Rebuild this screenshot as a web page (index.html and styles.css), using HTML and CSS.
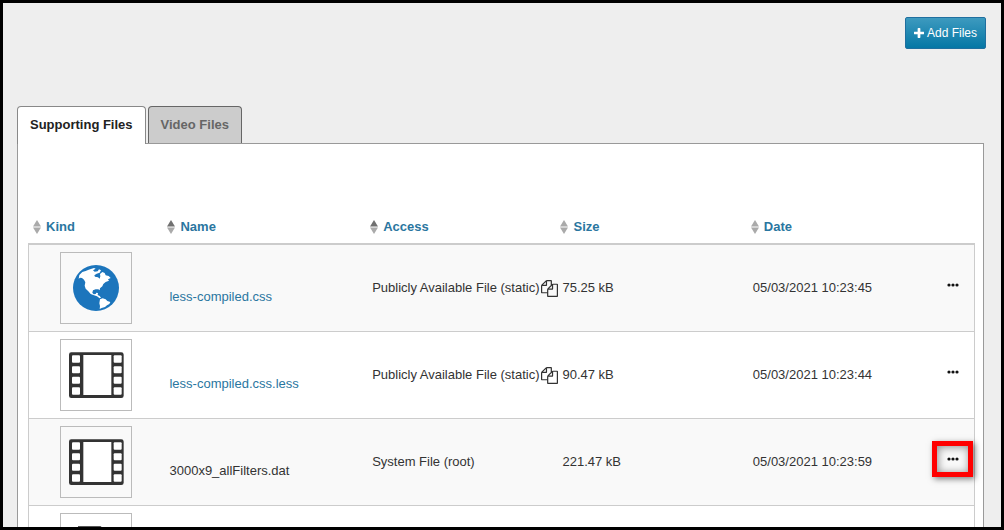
FILE: index.html
```html
<!DOCTYPE html>
<html lang="en">
<head>
<meta charset="utf-8">
<title>Files</title>
<link rel="stylesheet" href="styles.css">
</head>
<body class="page">
<svg class="sprite" aria-hidden="true">
  <symbol id="plus" viewBox="192 128 1408 1408"><path d="M1600 736v192q0 40-28 68t-68 28h-416v416q0 40-28 68t-68 28h-192q-40 0-68-28t-28-68v-416h-416q-40 0-68-28t-28-68v-192q0-40 28-68t68-28h416v-416q0-40 28-68t68-28h192q40 0 68 28t28 68v416h416q40 0 68 28t28 68z"/></symbol>
  <symbol id="copy" viewBox="0 0 1792 1792"><path d="M1696 384q40 0 68 28t28 68v1216q0 40-28 68t-68 28h-960q-40 0-68-28t-28-68v-288h-544q-40 0-68-28t-28-68v-672q0-40 20-88t48-76l408-408q28-28 76-48t88-20h416q40 0 68 28t28 68v328q68-40 128-40h416zm-544 213l-299 299h299v-299zm-640-384l-299 299h299v-299zm196 647l316-316v-416h-384v416q0 40-28 68t-68 28h-416v640h512v-256q0-40 20-88t48-76zm956 804v-1152h-384v416q0 40-28 68t-68 28h-416v640h896z"/></symbol>
  <symbol id="sort" viewBox="0 0 8 14"><path class="sort-up" d="M4 0L8 6.500H0z"/><path class="sort-down" d="M0 7.500H8L4 14z"/></symbol>
  <symbol id="dots" viewBox="0 0 12 4"><circle cx="2" cy="2" r="1.600"/><circle cx="6" cy="2" r="1.600"/><circle cx="10" cy="2" r="1.600"/></symbol>
  <symbol id="globe" viewBox="33 24 210 210">
    <circle cx="138" cy="129" r="69" fill="#1c75bc"/>
    <path fill="#fff" d="M86 101L88 90L97 81L107 78L116 74L132 69L137 71L129 76L134 80L143 79L147 73L153 76L149 83L140 86L133 91L135 95L144 97L149 101L151 94L150 87L157 81L164 84L167 91L176 93L182 99L174 103L177 107L167 111L160 117L157 124L150 130L149 136L145 133L137 133L129 136L127 143L131 148L137 147L139 143L144 144L143 150L149 153L153 158L149 160L141 154L132 151L122 147L115 139L107 131L104 122L106 112L102 104L96 99L90 98Z"/>
    <path fill="#fff" d="M150 163L158 160L167 163L172 168L181 171L178 177L171 181L165 186L155 189L149 192L150 183L148 175Z"/>
  </symbol>
  <symbol id="film" viewBox="33 15 210 210">
    <rect x="57" y="52" width="164" height="137" rx="7" fill="#333"/>
    <g fill="#fff"><rect x="100" y="60" width="84" height="120"/>
    <rect x="66" y="61" width="24" height="22" rx="3"/><rect x="66" y="94" width="24" height="21" rx="3"/><rect x="66" y="125" width="24" height="21" rx="3"/><rect x="66" y="157" width="24" height="22" rx="3"/>
    <rect x="191" y="61" width="24" height="22" rx="3"/><rect x="191" y="94" width="24" height="21" rx="3"/><rect x="191" y="125" width="24" height="21" rx="3"/><rect x="191" y="157" width="24" height="22" rx="3"/></g>
  </symbol>
  <symbol id="doc" viewBox="0 0 70 70"><path d="M18.500 13.500H39L51.500 26V56.500H18.500zM38 14V27H51" fill="#fff" stroke="#555" stroke-width="3"/></symbol>
</svg>

<header class="toolbar">
  <button type="button" class="add-button"><svg class="plus-icon" aria-hidden="true"><use href="#plus"/></svg>Add Files</button>
</header>

<main class="content">
  <div class="tabs" role="tablist">
    <button type="button" class="tab tab-active" role="tab" aria-selected="true">Supporting Files</button>
    <button type="button" class="tab" role="tab" aria-selected="false">Video Files</button>
  </div>
  <section class="panel">
    <table class="files">
      <colgroup><col class="col-kind"><col class="col-name"><col class="col-mid"><col class="col-mid"><col class="col-mid"><col></colgroup>
      <thead>
        <tr>
          <th><button type="button" class="sort"><svg class="sort-icon" aria-hidden="true"><use href="#sort"/></svg>Kind</button></th>
          <th><button type="button" class="sort sorted"><svg class="sort-icon" aria-hidden="true"><use href="#sort"/></svg>Name</button></th>
          <th><button type="button" class="sort sorted"><svg class="sort-icon" aria-hidden="true"><use href="#sort"/></svg>Access</button></th>
          <th><button type="button" class="sort"><svg class="sort-icon" aria-hidden="true"><use href="#sort"/></svg>Size</button></th>
          <th><button type="button" class="sort"><svg class="sort-icon" aria-hidden="true"><use href="#sort"/></svg>Date</button></th>
          <th></th>
        </tr>
      </thead>
      <tbody>
        <tr>
          <td class="kind"><svg class="thumb" role="img" aria-label="Web"><use href="#globe"/></svg></td>
          <td class="name"><a href="#">less-compiled.css</a></td>
          <td>Publicly Available File (static)<button type="button" class="icon-button copy" aria-label="Copy link"><svg class="copy-icon"><use href="#copy"/></svg></button></td>
          <td>75.25 kB</td>
          <td>05/03/2021 10:23:45</td>
          <td class="actions"><button type="button" class="icon-button" aria-label="More actions"><svg class="dots-icon"><use href="#dots"/></svg></button></td>
        </tr>
        <tr>
          <td class="kind"><svg class="thumb" role="img" aria-label="Media"><use href="#film"/></svg></td>
          <td class="name"><a href="#">less-compiled.css.less</a></td>
          <td>Publicly Available File (static)<button type="button" class="icon-button copy" aria-label="Copy link"><svg class="copy-icon"><use href="#copy"/></svg></button></td>
          <td>90.47 kB</td>
          <td>05/03/2021 10:23:44</td>
          <td class="actions"><button type="button" class="icon-button" aria-label="More actions"><svg class="dots-icon"><use href="#dots"/></svg></button></td>
        </tr>
        <tr>
          <td class="kind"><svg class="thumb" role="img" aria-label="Media"><use href="#film"/></svg></td>
          <td class="name">3000x9_allFilters.dat</td>
          <td>System File (root)</td>
          <td>221.47 kB</td>
          <td>05/03/2021 10:23:59</td>
          <td class="actions"><button type="button" class="icon-button highlighted" aria-label="More actions"><svg class="dots-icon"><use href="#dots"/></svg></button></td>
        </tr>
        <tr>
          <td class="kind"><svg class="thumb" role="img" aria-label="Document"><use href="#doc"/></svg></td>
          <td></td><td></td><td></td><td></td><td></td>
        </tr>
      </tbody>
    </table>
  </section>
</main>
</body>
</html>
```
FILE: styles.css
```css
* { box-sizing: border-box; }

.page {
  margin: 0;
  height: 100vh;
  overflow: hidden;
  display: flex;
  flex-direction: column;
  border: 3px solid #000;
  background: #eee;
  color: #333;
  font: 13px/20px "Liberation Sans", Arial, sans-serif;
}
.sprite { position: absolute; width: 0; height: 0; }
button { font: inherit; cursor: pointer; }

.toolbar {
  display: flex;
  justify-content: flex-end;
  padding: 14px 15px 57px;
}
.add-button {
  display: flex;
  align-items: center;
  gap: 3px;
  height: 32px;
  padding: 0 8px;
  border: 1px solid #1f6f9f;
  border-radius: 2px;
  background: linear-gradient(#3d9abf, #0577a5);
  color: #fff;
  font-size: 12px;
}
.plus-icon { width: 10px; height: 10px; fill: #fff; }

.content {
  flex: 1;
  min-height: 0;
  display: flex;
  flex-direction: column;
  padding: 0 17px 0 14px;
}
.tabs { display: flex; gap: 2px; }
.tab {
  height: 37px;
  padding: 0 12px;
  border: 1px solid #666;
  border-bottom: 0;
  border-radius: 4px 4px 0 0;
  background: #ccc;
  color: #666;
  font-weight: bold;
}
.tab-active {
  height: 38px;
  margin-bottom: -1px;
  padding-bottom: 1px;
  border-color: #888;
  background: #fff;
  color: #222;
  z-index: 1;
}
.panel {
  flex: 1;
  min-height: 0;
  overflow: hidden;
  padding: 66px 8px 0 10px;
  border: 1px solid #999;
  border-bottom: 0;
  background: #fff;
}

.files {
  width: 100%;
  table-layout: fixed;
  border-collapse: separate;
  border-spacing: 0;
}
.col-kind { width: 14.200%; }
.col-name { width: 21.400%; }
.col-mid { width: 20.100%; }
th {
  height: 35px;
  padding: 0 5px;
  border-bottom: 2px solid #ccc;
  text-align: left;
}
.sort {
  display: flex;
  align-items: center;
  gap: 5px;
  padding: 0;
  border: 0;
  background: none;
  color: #2a76a0;
  font-weight: bold;
}
.sort-icon { width: 8px; height: 14px; }
.sort-up { fill: var(--sort-up, #aaa); }
.sort-down { fill: #aaa; }
.sorted { --sort-up: #707070; }
td {
  height: 87px;
  padding: 0 7px;
  border-bottom: 1px solid #ccc;
  white-space: nowrap;
  vertical-align: middle;
}
td:first-child { border-left: 1px solid #ccc; }
td:last-child { border-right: 1px solid #ccc; }
tbody tr:nth-child(odd) { background: #f9f9f9; }
.kind { padding: 7px 0 7px 31px; }
.thumb {
  display: block;
  width: 72px;
  height: 72px;
  border: 1px solid #bbb;
}
.name { padding-top: 18px; }
.name a { color: #2a76a0; text-decoration: none; }
.icon-button {
  padding: 0;
  border: 0;
  background: none;
  vertical-align: middle;
}
.copy { margin-left: 1px; }
.copy-icon { display: block; width: 17px; height: 17px; fill: #333; }
.actions { padding: 0 4px 8px 0; text-align: center; }
.dots-icon { display: block; width: 12px; height: 4px; fill: #111; }
.highlighted { position: relative; }
.highlighted::after {
  content: "";
  position: absolute;
  inset: -16px -14px -16px -15px;
  border: 5px solid #f00;
  box-shadow: 2px 2px 6px rgba(0, 0, 0, .5), inset 1px 1px 9px rgba(0, 0, 0, .45);
}
```
